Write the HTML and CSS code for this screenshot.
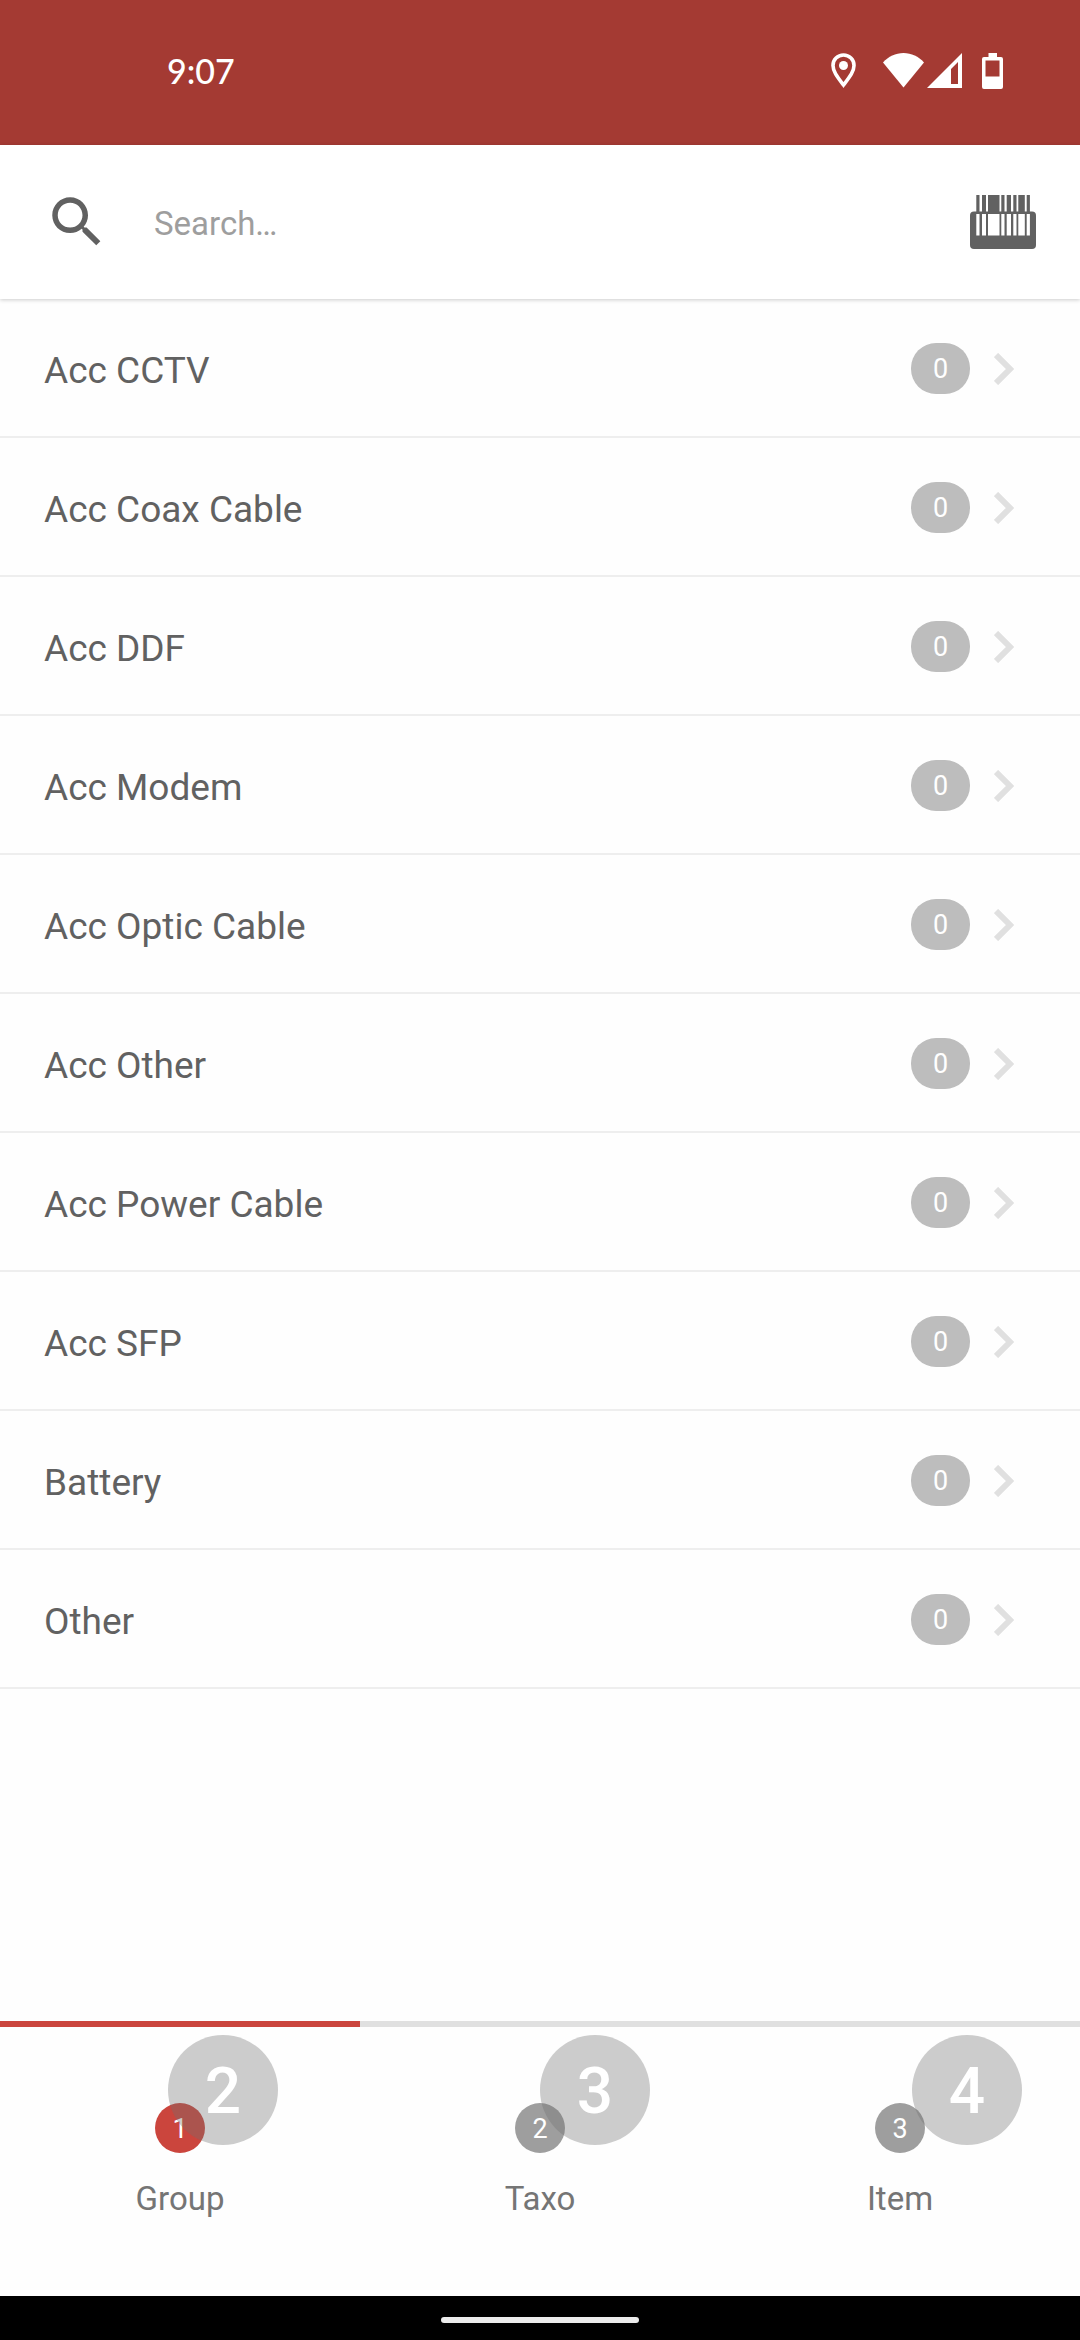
FILE: index.html
```html
<!DOCTYPE html>
<html lang="en">

<head>
    <meta charset="UTF-8">
    <meta name="viewport" content="width=device-width, initial-scale=1.0">
    <title>Groups</title>
    <link rel="stylesheet" href="styles.css">
</head>

<body>
    <header class="status-bar">
        <span class="clock">9:07</span>
        <div class="status-icons">
            <svg class="icon-pin" width="25" height="35" viewBox="0 0 25 35">
                <path d="M12.500 2C6.600 2 2 6.600 2 12.400C2 18.500 6.500 24 12.500 32C18.500 24 23 18.500 23 12.400C23 6.600 18.400 2 12.500 2Z" fill="none" stroke="#fff" stroke-width="3.600"/>
                <circle cx="12.500" cy="12.500" r="4.500" fill="#fff"/>
            </svg>
            <svg class="icon-wifi" width="41" height="35" viewBox="0 0 41 35">
                <path d="M0 9.500C5.500 3.500 12.500 0 20.500 0S35.500 3.500 41 9.500L20.500 34.500Z" fill="#fff"/>
            </svg>
            <svg class="icon-signal" width="35" height="35" viewBox="0 0 35 35">
                <path fill-rule="evenodd" d="M35 0V35H0ZM31 9L24 16V31H31Z" fill="#fff"/>
            </svg>
            <svg class="icon-battery" width="21" height="36" viewBox="0 0 21 36">
                <path fill-rule="evenodd" d="M6.500 0H15V4H19Q21 4 21 6V34Q21 36 19 36H2Q0 36 0 34V6Q0 4 2 4H6.500ZM3.500 7.500V23.500H17.500V7.500Z" fill="#fff"/>
            </svg>
        </div>
    </header>

    <form class="search-bar">
        <label for="search" aria-label="Search">
            <svg class="icon-search" width="66" height="66" viewBox="0 0 24 24">
                <path d="M15.500 14h-.79l-.28-.27C15.410 12.590 16 11.110 16 9.500 16 5.910 13.090 3 9.500 3S3 5.910 3 9.500 5.910 16 9.500 16c1.610 0 3.090-.59 4.230-1.570l.27.28v.79l5 4.990L20.490 19l-4.990-5zm-6 0C7.010 14 5 11.990 5 9.500S7.010 5 9.500 5 14 7.010 14 9.500 11.990 14 9.500 14z" fill="#616161"/>
            </svg>
        </label>
        <input type="text" id="search" placeholder="Search…">
        <button type="button" class="scan-btn" aria-label="Scan barcode">
            <svg width="66" height="54" viewBox="0 0 66 54">
                <rect y="16.500" width="66" height="37.500" rx="4" fill="#616161"/>
                <path d="M6.300 0h3.200v17h-3.200zM12 0h4v17h-4zM18 0h11.500v17h-11.500zM31.300 0h3.200v17h-3.200zM36.700 0h4.300v17h-4.300zM43.300 0h3.200v17h-3.200zM48.300 0h6.500v17h-6.500zM56.700 0h3.200v17h-3.200z" fill="#616161"/>
                <path d="M6.300 19h3.200v21.500h-3.200zM12 19h4v21.500h-4zM18 19h11.500v21.500h-11.500zM31.300 19h3.200v21.500h-3.200zM36.700 19h4.300v21.500h-4.300zM43.300 19h3.200v21.500h-3.200zM48.300 19h6.500v21.500h-6.500zM56.700 19h3.200v21.500h-3.200z" fill="#fff"/>
            </svg>
        </button>
    </form>

    <main>
        <ul class="group-list">
            <li><a href="#"><span class="name">Acc CCTV</span><span class="count">0</span><svg class="chevron" width="20" height="32" viewBox="0 0 20 32"><path d="M2 2L16 16L2 30"/></svg></a></li>
            <li><a href="#"><span class="name">Acc Coax Cable</span><span class="count">0</span><svg class="chevron" width="20" height="32" viewBox="0 0 20 32"><path d="M2 2L16 16L2 30"/></svg></a></li>
            <li><a href="#"><span class="name">Acc DDF</span><span class="count">0</span><svg class="chevron" width="20" height="32" viewBox="0 0 20 32"><path d="M2 2L16 16L2 30"/></svg></a></li>
            <li><a href="#"><span class="name">Acc Modem</span><span class="count">0</span><svg class="chevron" width="20" height="32" viewBox="0 0 20 32"><path d="M2 2L16 16L2 30"/></svg></a></li>
            <li><a href="#"><span class="name">Acc Optic Cable</span><span class="count">0</span><svg class="chevron" width="20" height="32" viewBox="0 0 20 32"><path d="M2 2L16 16L2 30"/></svg></a></li>
            <li><a href="#"><span class="name">Acc Other</span><span class="count">0</span><svg class="chevron" width="20" height="32" viewBox="0 0 20 32"><path d="M2 2L16 16L2 30"/></svg></a></li>
            <li><a href="#"><span class="name">Acc Power Cable</span><span class="count">0</span><svg class="chevron" width="20" height="32" viewBox="0 0 20 32"><path d="M2 2L16 16L2 30"/></svg></a></li>
            <li><a href="#"><span class="name">Acc SFP</span><span class="count">0</span><svg class="chevron" width="20" height="32" viewBox="0 0 20 32"><path d="M2 2L16 16L2 30"/></svg></a></li>
            <li><a href="#"><span class="name">Battery</span><span class="count">0</span><svg class="chevron" width="20" height="32" viewBox="0 0 20 32"><path d="M2 2L16 16L2 30"/></svg></a></li>
            <li><a href="#"><span class="name">Other</span><span class="count">0</span><svg class="chevron" width="20" height="32" viewBox="0 0 20 32"><path d="M2 2L16 16L2 30"/></svg></a></li>
        </ul>
    </main>

    <nav class="steps">
        <button type="button" class="step active"><span class="step-number">1</span>Group</button>
        <button type="button" class="step"><span class="step-number">2</span>Taxo</button>
        <button type="button" class="step"><span class="step-number">3</span>Item</button>

        <!-- floating markers over the steps -->
        <div class="markers">
            <span class="marker">2</span>
            <span class="marker">3</span>
            <span class="marker">4</span>
        </div>
    </nav>

    <footer class="system-nav">
        <div class="home-pill"></div>
    </footer>
</body>

</html>
```
FILE: styles.css
```css
* {
    box-sizing: border-box;
}

body {
    font-family: Roboto, "Liberation Sans", sans-serif;
    margin: 0;
    min-height: 100vh;
    display: flex;
    flex-direction: column;
    background-color: #fefefe;
    color: #616161;
}

svg {
    display: block;
}

button {
    font-family: inherit;
    background: none;
    border: none;
    padding: 0;
    cursor: pointer;
}

.status-bar {
    display: flex;
    justify-content: space-between;
    align-items: center;
    height: 145px;
    padding: 0 77px 4px 167px;
    background-color: #a43a33;
    color: #fff;
}

.clock {
    font-family: Lato, Roboto, sans-serif;
    font-size: 34px;
    font-weight: 500;
}

.status-icons {
    display: flex;
    align-items: center;
}

.icon-pin {
    margin-right: 27px;
}

.icon-wifi {
    margin-right: 3px;
}

.icon-signal {
    margin-right: 20px;
}

.search-bar {
    display: flex;
    align-items: center;
    height: 154px;
    padding: 0 44px;
    background-color: #fff;
    box-shadow: 0 1px 4px rgba(0, 0, 0, 0.2);
    z-index: 1;
}

.search-bar input {
    flex: 1;
    min-width: 0;
    margin-left: 44px;
    padding: 2px 0 0;
    border: none;
    outline: none;
    background: none;
    font-family: inherit;
    font-size: 33px;
    color: #616161;
}

.search-bar input::placeholder {
    color: #9e9e9e;
    opacity: 1;
}

.group-list {
    list-style: none;
    margin: 0;
    padding: 0;
}

.group-list a {
    display: flex;
    align-items: center;
    height: 139px;
    padding: 2px 66px 0 44px;
    border-bottom: 2px solid #eee;
    color: #616161;
    text-decoration: none;
}

.name {
    flex: 1;
    padding-top: 4px;
    font-size: 37px;
}

.count {
    width: 59px;
    height: 51px;
    margin-right: 24px;
    border-radius: 25px;
    background-color: #bdbdbd;
    color: #fff;
    font-size: 27px;
    line-height: 53px;
    text-align: center;
}

.chevron path {
    fill: none;
    stroke: #e0e0e0;
    stroke-width: 6;
}

.steps {
    position: relative;
    display: grid;
    grid-template-columns: repeat(3, 1fr);
    height: 275px;
    margin-top: auto;
}

.step {
    display: flex;
    flex-direction: column;
    align-items: center;
    gap: 26px;
    padding-top: 76px;
    border-top: 6px solid #e0e0e0;
    color: #757575;
    font-size: 33px;
}

.step.active {
    border-color: #cb453d;
}

.step-number {
    width: 50px;
    height: 50px;
    border-radius: 50%;
    background-color: #9e9e9e;
    color: #fff;
    font-size: 27px;
    line-height: 52px;
}

.step.active .step-number {
    background-color: #cb453d;
}

.markers {
    position: absolute;
    top: 14px;
    left: 168px;
    right: 58px;
    display: flex;
    justify-content: space-between;
    pointer-events: none;
}

.marker {
    width: 110px;
    height: 110px;
    border-radius: 50%;
    background-color: rgba(112, 112, 112, 0.35);
    color: #fff;
    font-size: 64px;
    font-weight: 500;
    line-height: 114px;
    text-align: center;
}

.system-nav {
    display: flex;
    align-items: center;
    justify-content: center;
    height: 44px;
    padding-top: 4px;
    background-color: #000;
}

.home-pill {
    width: 198px;
    height: 6px;
    border-radius: 3px;
    background-color: #ebebeb;
}
```
